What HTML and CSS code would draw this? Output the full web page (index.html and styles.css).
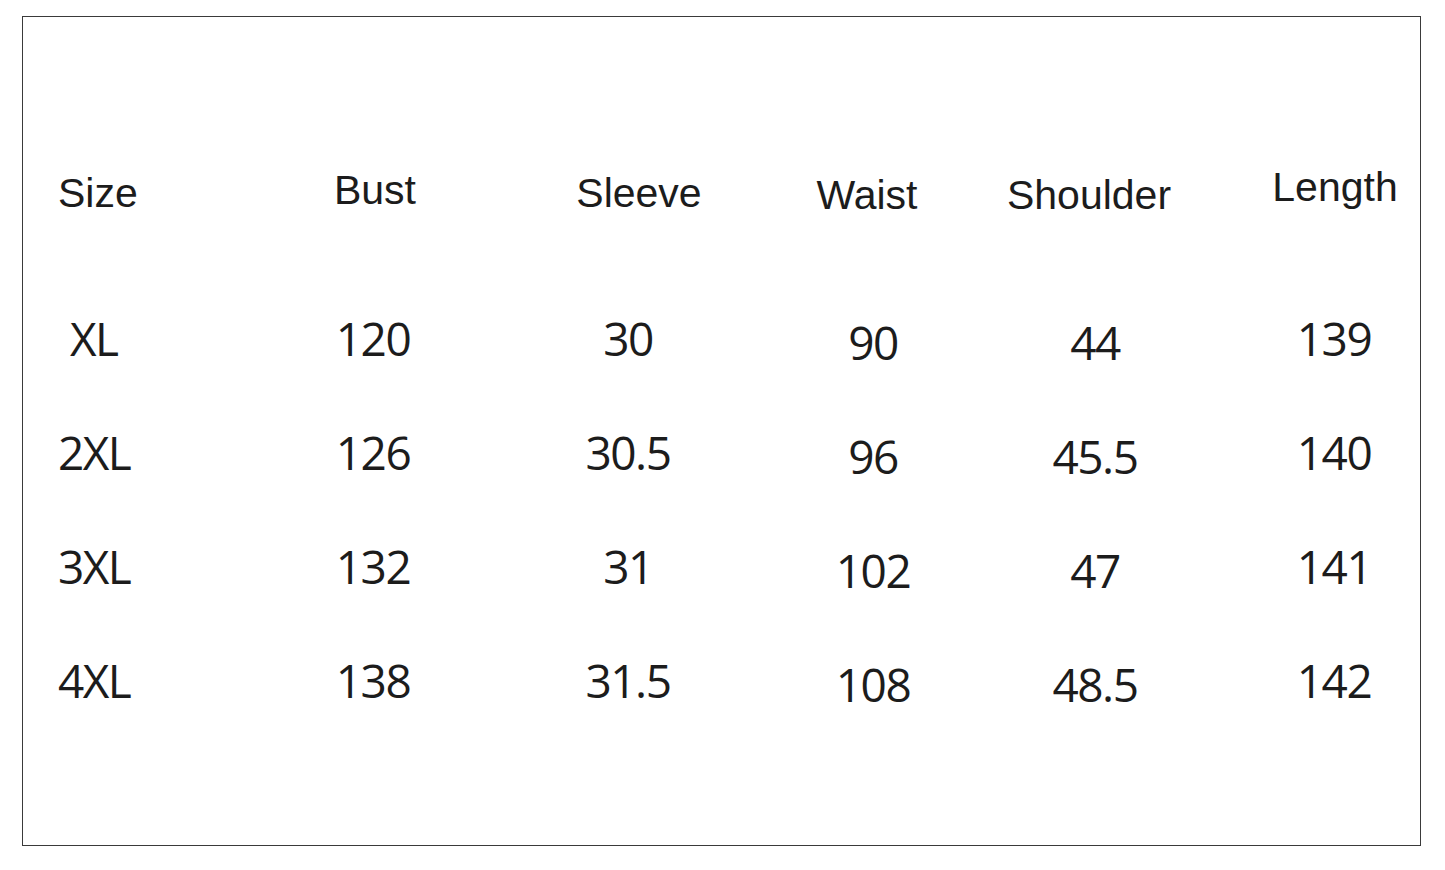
FILE: index.html
```html
<!DOCTYPE html>
<html lang="en">
<head>
<meta charset="utf-8">
<title>Size Chart</title>
<link rel="stylesheet" href="styles.css">
</head>
<body>
<div class="chart">
  <div class="row head">
    <div class="cell c-size h-size">Size</div>
    <div class="cell c-bust h-bust">Bust</div>
    <div class="cell c-sleeve h-sleeve">Sleeve</div>
    <div class="cell c-waist h-waist">Waist</div>
    <div class="cell c-shoulder h-shoulder">Shoulder</div>
    <div class="cell c-length h-length">Length</div>
  </div>
  <div class="row data">
    <div class="cell c-size indent">XL</div>
    <div class="cell c-bust">120</div>
    <div class="cell c-sleeve">30</div>
    <div class="cell c-waist low">90</div>
    <div class="cell c-shoulder low">44</div>
    <div class="cell c-length">139</div>
  </div>
  <div class="row data">
    <div class="cell c-size">2XL</div>
    <div class="cell c-bust">126</div>
    <div class="cell c-sleeve">30.5</div>
    <div class="cell c-waist low">96</div>
    <div class="cell c-shoulder low">45.5</div>
    <div class="cell c-length">140</div>
  </div>
  <div class="row data">
    <div class="cell c-size">3XL</div>
    <div class="cell c-bust">132</div>
    <div class="cell c-sleeve">31</div>
    <div class="cell c-waist low">102</div>
    <div class="cell c-shoulder low">47</div>
    <div class="cell c-length">141</div>
  </div>
  <div class="row data">
    <div class="cell c-size">4XL</div>
    <div class="cell c-bust">138</div>
    <div class="cell c-sleeve">31.5</div>
    <div class="cell c-waist low">108</div>
    <div class="cell c-shoulder low">48.5</div>
    <div class="cell c-length">142</div>
  </div>
</div>
</body>
</html>
```

FILE: styles.css
```css
html, body {
  margin: 0;
  padding: 0;
  background: #ffffff;
}

.chart {
  margin: 16px 0 0 22px;
  width: 1362px;
  height: 678px;
  border: 1px solid #3a3a3a;
  padding: 150px 0 0 35px;
  box-sizing: content-box;
}

.row {
  display: grid;
  grid-template-columns: 215px 200px 310px 180px 264px 193px;
  align-items: start;
}

.cell {
  text-align: center;
  color: #1c1c1c;
  white-space: nowrap;
}

.head {
  height: 148px;
}

.head .cell {
  font-family: "Liberation Sans", Arial, sans-serif;
  font-size: 41px;
  line-height: 41px;
}

.data {
  height: 114px;
}

.data .cell {
  font-family: "Open Sans", "Noto Sans", sans-serif;
  font-size: 46px;
  line-height: 46px;
  letter-spacing: -1.5px;
}

.c-size { text-align: left; }
.c-length { padding-left: 21px; }

.indent { padding-left: 12px; }
.low { padding-top: 4px; }

.h-size { padding-top: 6px; }
.h-bust { padding-top: 3px; padding-left: 4px; }
.h-sleeve { padding-top: 6px; padding-left: 22px; }
.h-waist { padding-top: 8px; padding-right: 12px; }
.h-shoulder { padding-top: 8px; padding-right: 12px; }
.h-length { padding-top: 0; padding-left: 23px; }
```
